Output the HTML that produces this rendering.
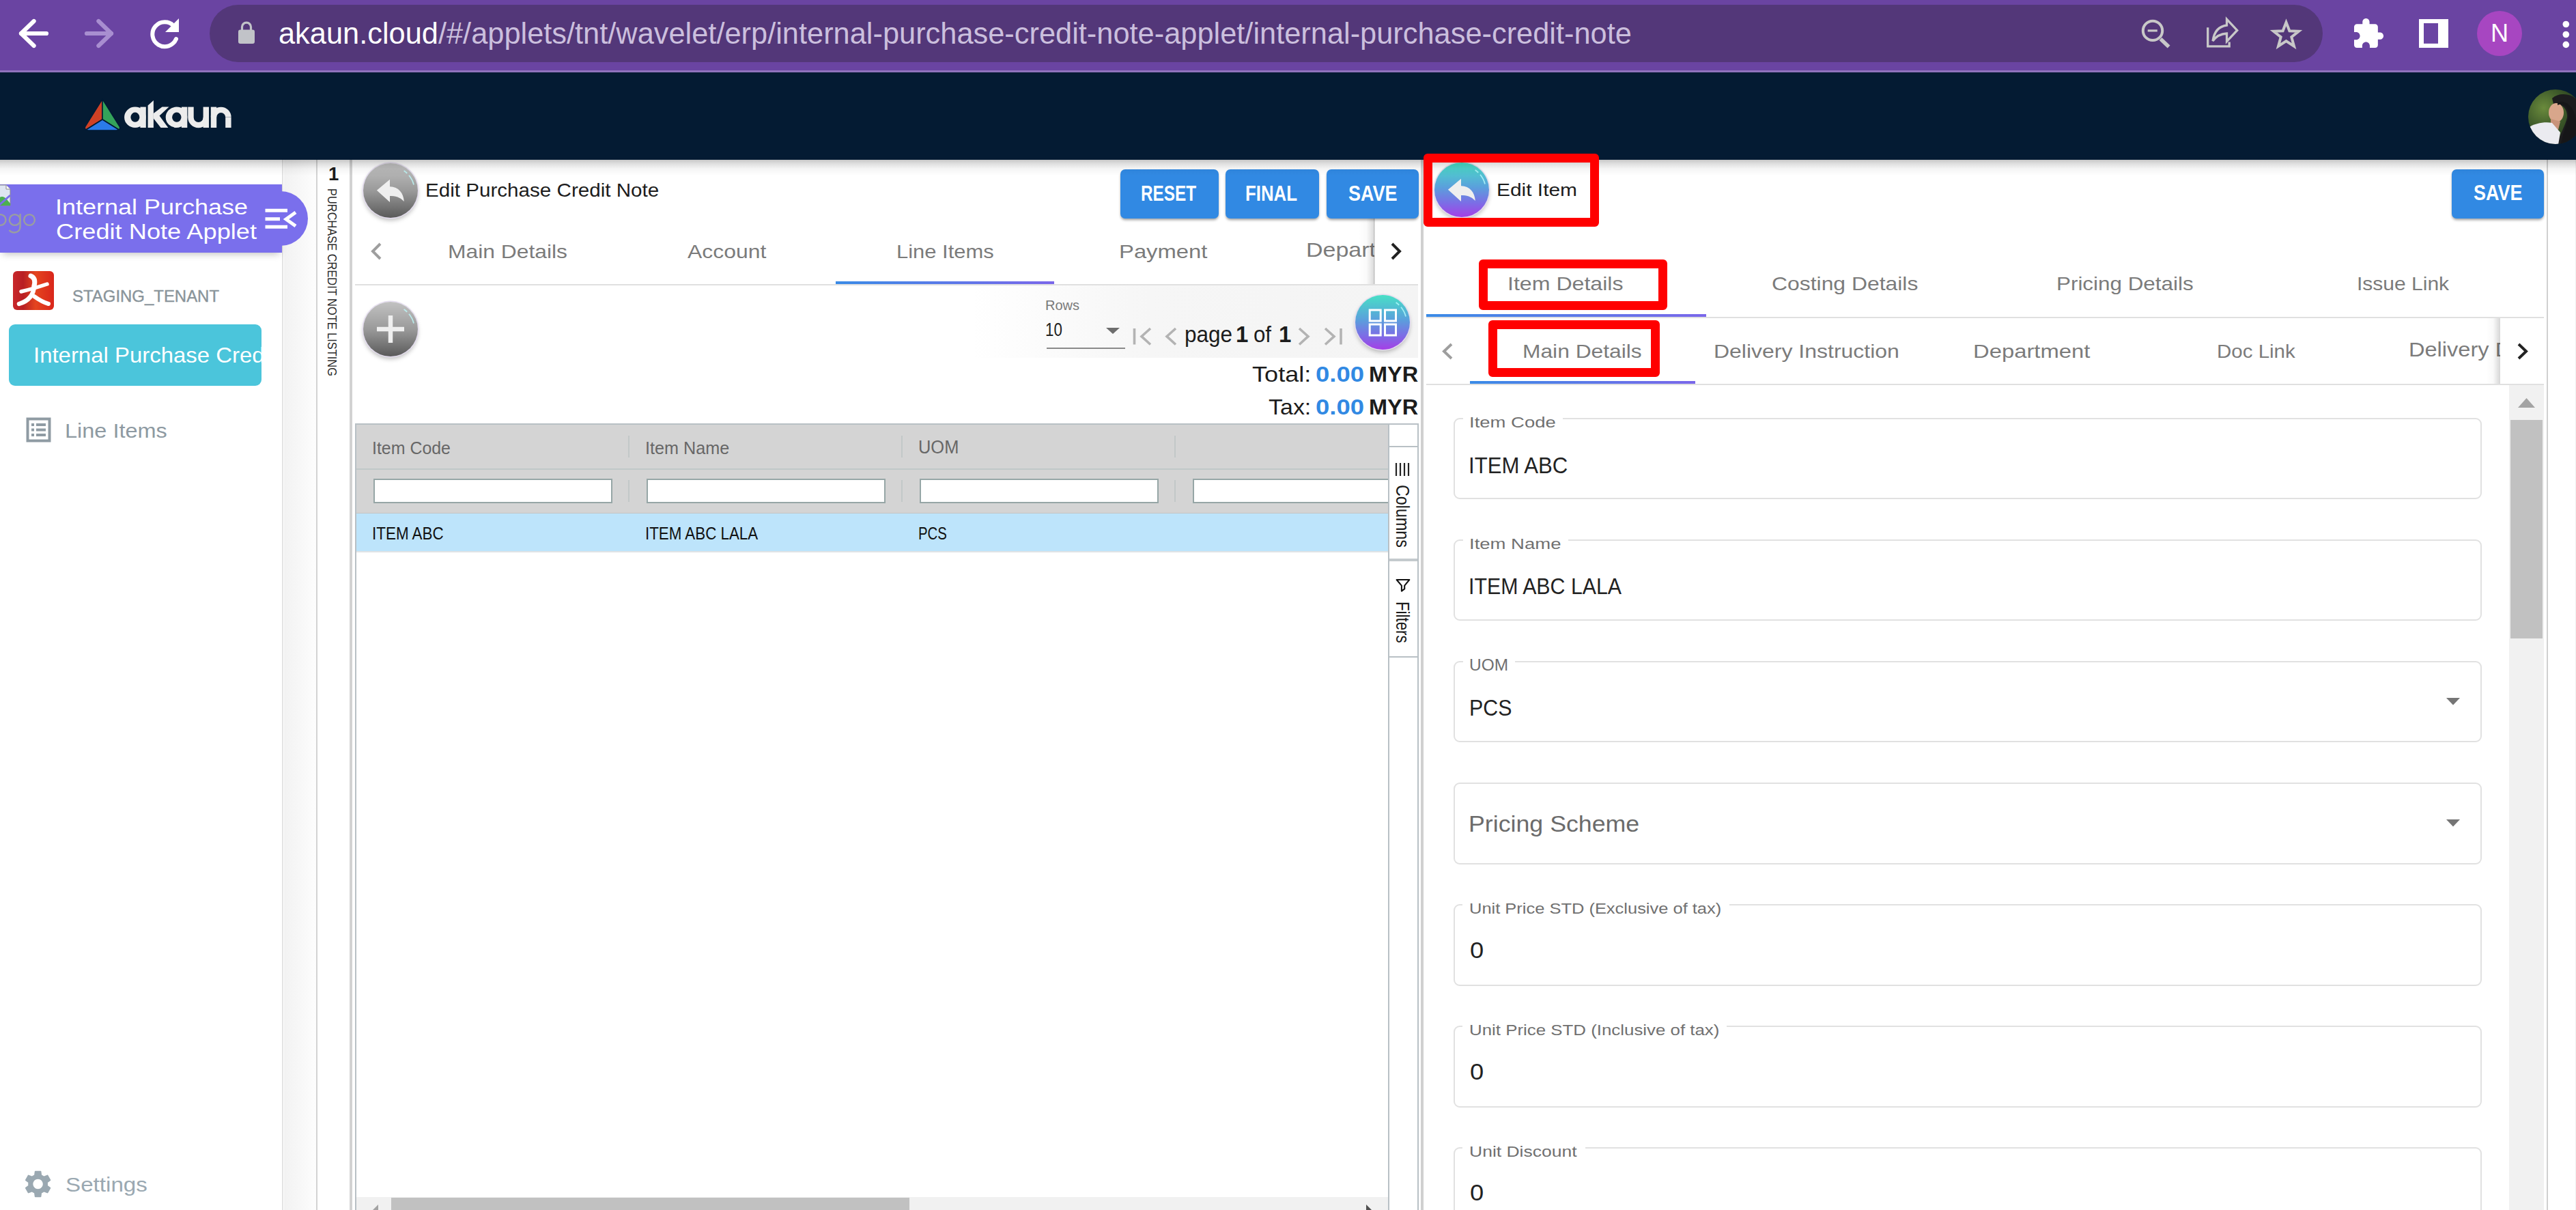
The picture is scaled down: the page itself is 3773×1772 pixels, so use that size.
<!DOCTYPE html>
<html><head><meta charset="utf-8"><title>akaun</title>
<style>
html,body{margin:0;padding:0;width:3773px;height:1772px;overflow:hidden;background:#fff;}
body{position:relative;font-family:"Liberation Sans",sans-serif;}
.t{position:absolute;white-space:nowrap;line-height:1;transform-origin:0 0;}
svg{overflow:visible}
</style></head><body>
<div style="position:absolute;left:0px;top:0px;width:3773px;height:103px;background:#6a44a2"></div>
<div style="position:absolute;left:0px;top:103px;width:3773px;height:3px;background:#9073bd"></div>
<div style="position:absolute;left:307px;top:7px;width:3095px;height:84px;background:#533779;border-radius:42px"></div>
<svg style="position:absolute;left:20px;top:20px;" width="60" height="60" viewBox="0 0 60 60"><g fill="none" stroke="#fff" stroke-width="6.2" stroke-linecap="round" stroke-linejoin="round"><path d="M11 29 H48"/><path d="M29.6 11 L11 29 L29.6 47"/></g></svg>
<svg style="position:absolute;left:116px;top:20px;" width="60" height="60" viewBox="0 0 60 60"><g fill="none" stroke="#a88ed0" stroke-width="6.2" stroke-linecap="round" stroke-linejoin="round"><path d="M11 29 H47"/><path d="M28.4 11 L47 29 L28.4 47"/></g></svg>
<svg style="position:absolute;left:212px;top:20px;" width="60" height="60" viewBox="0 0 60 60"><g fill="none" stroke="#fff" stroke-width="6" stroke-linecap="round"><path d="M43 18.5 A18 18 0 1 0 46 37"/></g><path d="M50 7 L50 27 L30 27 Z" fill="#fff"/></svg>
<svg style="position:absolute;left:345px;top:27px;" width="32" height="40" viewBox="0 0 32 40"><rect x="4" y="16.5" width="24" height="20.5" rx="3" fill="#c1c3c8"/><path d="M9.5 17 V12.6 A6.5 6.5 0 0 1 22.5 12.6 V17" fill="none" stroke="#c1c3c8" stroke-width="3.2"/></svg>
<div id="url" class="t" style="left:408.0px;top:26.6px;font-size:44.00px;color:#fff;font-weight:normal;transform:scaleX(0.9858);">akaun.cloud<span style="color:#cbbfdd">/#/applets/tnt/wavelet/erp/internal-purchase-credit-note-applet/internal-purchase-credit-note</span></div>
<svg style="position:absolute;left:3130px;top:22px;" width="56" height="56" viewBox="0 0 56 56"><g fill="none" stroke="#c8c8c8"><circle cx="23" cy="22.9" r="14.2" stroke-width="4"/><path d="M34.5 35 L46.6 46.5" stroke-width="5.5"/><path d="M15.7 22.9 H29.8" stroke-width="3.2"/></g></svg>
<svg style="position:absolute;left:3226px;top:22px;" width="56" height="56" viewBox="0 0 56 56"><g fill="none" stroke="#c8c8c8" stroke-width="3.3" stroke-linejoin="miter"><path d="M7.7 18.2 V45.9 H39.2 V39.6"/><path d="M15 38 C17 24 24 16.5 35.5 15 V6.1 L50.7 22.4 L35.5 38.6 V27 C26 27.5 20 31 15 38 Z"/></g></svg>
<svg style="position:absolute;left:3320px;top:22px;" width="56" height="56" viewBox="0 0 56 56"><path d="M28.50 10.68 L33.38 23.28 L46.90 23.84 L36.32 32.30 L40.00 45.64 L28.50 38.10 L17.00 45.64 L20.68 32.30 L10.10 23.84 L23.62 23.28 Z" fill="none" stroke="#c8c8c8" stroke-width="4" stroke-linejoin="miter"/></svg>
<svg style="position:absolute;left:3430px;top:10px;" width="80" height="80" viewBox="0 0 80 80"><path fill="#fff" transform="translate(13.9,14.95) scale(2.05)" d="M20.5 11H19V7c0-1.1-.9-2-2-2h-4V3.5C13 2.12 11.88 1 10.5 1S8 2.12 8 3.5V5H4c-1.1 0-1.99.9-1.99 2v3.8H3.5c1.49 0 2.7 1.21 2.7 2.7s-1.21 2.7-2.7 2.7H2V20c0 1.1.9 2 2 2h3.8v-1.5c0-1.490 1.21-2.7 2.7-2.7 1.49 0 2.7 1.21 2.7 2.7V22H17c1.1 0 2-.9 2-2v-4h1.5c1.38 0 2.5-1.12 2.5-2.5S21.88 11 20.5 11z"/></svg>
<svg style="position:absolute;left:3538px;top:22px;" width="56" height="56" viewBox="0 0 56 56"><rect x="5" y="6" width="43" height="42" fill="#fff"/><rect x="12" y="12" width="21" height="29.8" fill="#6a44a2"/></svg>
<div style="position:absolute;left:3628px;top:16px;width:66px;height:66px;border-radius:50%;background:#a746c1"></div>
<div id="avN" class="t" style="left:3648.2px;top:31.4px;font-size:36.00px;color:#fff;font-weight:normal;transform:scaleX(1.0024);">N</div>
<svg style="position:absolute;left:3745px;top:25px;" width="30" height="50" viewBox="0 0 30 50"><circle cx="13.3" cy="10.5" r="4.8" fill="#fff"/><circle cx="13.3" cy="25.5" r="4.8" fill="#fff"/><circle cx="13.3" cy="40.4" r="4.8" fill="#fff"/></svg>
<div style="position:absolute;left:0px;top:106px;width:3773px;height:128px;background:#041b33"></div>
<svg style="position:absolute;left:120px;top:140px;" width="62" height="56" viewBox="0 0 62 56"><g stroke="#021a33" stroke-width="1.5" stroke-linejoin="round"><path d="M30 5 L30 35 L6 50 C4 49 4 47 5 45 Z" fill="#d04125"/><path d="M30 5 L55 45 C56 47 56 49 54 50 L30 35 Z" fill="#34a35a"/><path d="M6 50 L30 35 L54 50 C53 51 52 51 50 51 L10 51 C8 51 7 51 6 50 Z" fill="#2b7be9"/></g></svg>
<svg style="position:absolute;left:0px;top:0px;" width="400" height="240" viewBox="0 0 400 240"><g fill="#ececec"><ellipse cx="197.9" cy="171.8" rx="15.8" ry="15.2"/><rect x="205.4" y="156.6" width="8.4" height="30.4"/><polygon points="216.6,154.5 224.9,147.1 224.9,187 216.6,187"/><polygon points="224.9,166 237.5,156.6 247.5,156.6 233.5,169.5 246.3,187 235.5,187 224.9,173.5"/><ellipse cx="258.5" cy="171.8" rx="15.8" ry="15.2"/><rect x="265.9" y="156.6" width="8.4" height="30.4"/><rect x="275.3" y="156.6" width="8.4" height="15.4"/><rect x="297.6" y="156.6" width="8.4" height="30.4"/><path d="M275.3 172 A15.35 15.35 0 0 0 306 172 H297.6 A6.95 6.95 0 0 1 283.7 172 Z"/><rect x="308.8" y="156.6" width="8.4" height="30.4"/><rect x="330.2" y="171.6" width="8.4" height="15.4"/><path d="M308.8 171.6 A14.9 14.9 0 0 1 338.6 171.6 H330.2 A6.5 6.5 0 0 0 317.2 171.6 Z"/></g><g fill="#041b33"><ellipse cx="197.9" cy="171.7" rx="6.5" ry="7.1"/><ellipse cx="258.8" cy="171.7" rx="6.7" ry="7.1"/></g></svg>
<svg style="position:absolute;left:3700px;top:128px;" width="86" height="86" viewBox="0 0 86 86"><defs><clipPath id="pc"><circle cx="43" cy="43" r="40"/></clipPath><radialGradient id="pg" cx="0.3" cy="0.35" r="0.7"><stop offset="0" stop-color="#6a8a3c"/><stop offset="0.5" stop-color="#3e5a2a"/><stop offset="1" stop-color="#22361c"/></radialGradient></defs><g clip-path="url(#pc)"><rect x="0" y="0" width="86" height="86" fill="url(#pg)"/><path d="M38 16 C52 4 78 10 86 36 L86 90 L44 90 C47 72 57 58 60 44 C61 32 54 24 40 24 Z" fill="#1c1c1e"/><ellipse cx="44" cy="37" rx="11" ry="14" fill="#d8a68b"/><path d="M36 46 L50 50 L47 62 L36 60 Z" fill="#c8937a"/><path d="M2 60 C12 52 28 50 38 52 L50 66 L46 90 L0 90 Z" fill="#ebebf0"/><path d="M46 26 C58 20 66 36 60 50 C58 60 52 70 50 90 L70 90 C72 70 76 50 70 36 C66 26 56 18 46 22 Z" fill="#161618"/></g></svg>
<div style="position:absolute;left:416px;top:234px;width:47px;height:1538px;background:linear-gradient(90deg,#f2f2f2,#fdfdfd)"></div>
<div style="position:absolute;left:463px;top:234px;width:2px;height:1538px;background:#d3d3d3"></div>
<div id="one" class="t" style="left:481.0px;top:240.6px;font-size:27.50px;color:#1b1b1b;font-weight:bold;">1</div>
<div id="pcnl" class="t" style="left:495.8px;top:275.6px;font-size:19px;color:#2a2a2a;transform-origin:0 0;transform:rotate(90deg) scaleX(0.8634)">PURCHASE CREDIT NOTE LISTING</div>
<div id="pcnl_ref" class="t" style="left:0.0px;top:-316.1px;font-size:19.00px;color:#000;font-weight:normal;transform:scaleX(0.8634);">PURCHASE CREDIT NOTE LISTING</div>
<div style="position:absolute;left:512px;top:234px;width:4px;height:1538px;background:#d2d2d2"></div>
<div style="position:absolute;left:413px;top:234px;width:2px;height:1538px;background:#e3e3e3"></div>
<div style="position:absolute;left:0px;top:270px;width:413px;height:100px;background:#7a6fec;box-shadow:0 6px 10px -4px rgba(0,0,0,0.25)"></div>
<div style="position:absolute;left:371px;top:280px;width:80px;height:80px;border-radius:50%;background:#7a6fec"></div>
<div style="position:absolute;left:0px;top:270px;width:413px;height:100px;background:#7a6fec"></div>
<svg style="position:absolute;left:0px;top:270px;" width="18" height="34" viewBox="0 0 18 34"><path d="M-4 1 H9 L15 7 V31 H-4 Z" fill="#dfe6f2" stroke="#8a8a8a" stroke-width="1"/><path d="M9 1 V7 H15" fill="#fff" stroke="#8a8a8a" stroke-width="1"/><path d="M-4 22 Q3 14 10 22 L15 28 V31 H-4 Z" fill="#4caf50"/><path d="M15 16 L-2 31" stroke="#7a6fec" stroke-width="3"/></svg>
<svg style="position:absolute;left:0px;top:300px;" width="60" height="45" viewBox="0 0 60 45"><g fill="none" stroke="#9a9ea0" stroke-width="2.4"><circle cx="0.6" cy="22" r="7.9"/><circle cx="21.7" cy="22" r="7.9"/><path d="M29.6 13 V31 C29.6 38 25 40.5 21 40.5 C17.5 40.5 15 39 13.6 37"/><circle cx="43" cy="22" r="7.9"/></g></svg>
<div id="iph1" class="t" style="left:80.7px;top:287.8px;font-size:30.64px;color:#fff;font-weight:normal;transform:scaleX(1.1745);">Internal Purchase</div>
<div id="iph2" class="t" style="left:81.8px;top:323.8px;font-size:30.64px;color:#fff;font-weight:normal;transform:scaleX(1.1831);">Credit Note Applet</div>
<svg style="position:absolute;left:380px;top:300px;" width="60" height="42" viewBox="0 0 60 42"><g stroke="#fff" stroke-width="5" fill="none"><path d="M8.5 8.3 H41"/><path d="M8.5 20.7 H30"/><path d="M8.5 32.3 H41"/><path d="M53 11 L39 21 L53 31" stroke-linejoin="miter"/></g></svg>
<div style="position:absolute;left:19px;top:397px;width:60px;height:57px;border-radius:6px;background:linear-gradient(90deg,#c9272b 0%,#b81f23 25%,#e4451f 55%,#d9261b 100%)"></div>
<svg style="position:absolute;left:19px;top:397px;" width="60" height="57" viewBox="0 0 60 57"><g fill="none" stroke="#fff" stroke-linecap="round"><path d="M26 7 C31 9 33 14 31 22" stroke-width="7"/><path d="M12 30 C25 27 38 23 50 19" stroke-width="5.5"/><path d="M31 21 C31 34 23 44 9 48" stroke-width="6.5"/><path d="M31 37 C38 42 45 46 52 48" stroke-width="6"/></g></svg>
<div id="stag" class="t" style="left:106.0px;top:422.8px;font-size:23.20px;color:#89949a;font-weight:normal;transform:scaleX(1.0323);-webkit-text-stroke:0.4px #89949a;">STAGING_TENANT</div>
<div style="position:absolute;left:13px;top:475px;width:370px;height:90px;border-radius:9px;background:#4bc5db;overflow:hidden"><div id="ipc" class="t" style="left:36px;top:28.8px;font-size:32px;color:#fff;transform:scaleX(1.0287)">Internal Purchase Credit Note Applet</div></div>
<div id="ipc_ref" class="t" style="left:49.0px;top:-227.2px;font-size:32.00px;color:#fff;font-weight:normal;transform:scaleX(1.0287);">Internal Purchase</div>
<svg style="position:absolute;left:36px;top:609px;" width="42" height="42" viewBox="0 0 42 42"><g fill="none" stroke="#8f9ba3"><rect x="4.5" y="4.5" width="32" height="32" stroke-width="4"/></g><g fill="#8f9ba3"><rect x="10" y="11" width="4" height="4"/><rect x="17" y="11" width="14" height="4"/><rect x="10" y="18.5" width="4" height="4"/><rect x="17" y="18.5" width="14" height="4"/><rect x="10" y="26" width="4" height="4"/><rect x="17" y="26" width="14" height="4"/></g></svg>
<div id="li" class="t" style="left:94.7px;top:616.5px;font-size:29.14px;color:#8e9aa2;font-weight:normal;transform:scaleX(1.1148);">Line Items</div>
<svg style="position:absolute;left:30px;top:1705px;" width="56" height="56" viewBox="0 0 56 56"><path fill="#9aa8b1" transform="translate(1.6,5) scale(2.0)" d="M19.14 12.94c.04-.3.06-.61.06-.94 0-.32-.02-.64-.07-.94l2.03-1.58c.18-.14.23-.41.12-.61l-1.92-3.32c-.12-.22-.37-.29-.59-.22l-2.39.96c-.5-.38-1.03-.7-1.62-.94l-.36-2.54c-.04-.24-.24-.41-.48-.41h-3.840c-.24 0-.43.17-.47.41l-.36 2.54c-.59.24-1.13.57-1.62.94l-2.39-.96c-.22-.08-.47 0-.59.22L2.74 8.87c-.12.21-.08.47.12.61l2.03 1.58c-.05.3-.09.63-.09.94s.02.64.07.94l-2.03 1.58c-.18.14-.23.41-.12.61l1.92 3.32c.12.22.37.29.59.22l2.39-.96c.5.38 1.03.7 1.62.94l.36 2.54c.05.24.24.41.48.41h3.84c.24 0 .44-.17.47-.41l.36-2.54c.59-.24 1.13-.56 1.62-.94l2.39.96c.22.08.47 0 .59-.22l1.92-3.32c.12-.22.07-.47-.12-.61l-2.010-1.58zM12 15.6c-1.98 0-3.6-1.62-3.6-3.6s1.62-3.6 3.6-3.6 3.6 1.62 3.6 3.6-1.62 3.6-3.6 3.6z"/></svg>
<div id="set" class="t" style="left:95.8px;top:1721.0px;font-size:28.67px;color:#9aa8b1;font-weight:normal;transform:scaleX(1.1582);">Settings</div>
<div style="position:absolute;left:532px;top:238.7px;width:80px;height:80px;border-radius:50%;background:linear-gradient(#c2c2c2,#9a9a9a 50%,#5a5a5a);box-shadow:0 0 0 1.5px #e4dcef,0 4px 6px rgba(0,0,0,0.25)"></div>
<svg style="position:absolute;left:532px;top:238.7px;" width="80" height="80" viewBox="0 0 80 80"><path d="M 59.6 11.0 A 35 35 0 0 1 74.0 31.5" fill="none" stroke="rgba(190,255,255,0.75)" stroke-width="1.8" stroke-dasharray="6 4 40"/><path d="M19.9 39.8 L39 23.7 L39 34.3 C52 34.5 59 44 59.8 56 C54 49.5 47 47.9 39 47.9 L39 57 Z" fill="#efefef"/><!--12.85000000000002311.350000000000023--></svg>
<div style="position:absolute;left:532px;top:442px;width:80px;height:80px;border-radius:50%;background:linear-gradient(#c2c2c2,#9a9a9a 50%,#5a5a5a);box-shadow:0 0 0 1.5px #e4dcef,0 4px 6px rgba(0,0,0,0.25)"></div>
<svg style="position:absolute;left:532px;top:442px;" width="80" height="80" viewBox="0 0 80 80"><path d="M 59.6 11.0 A 35 35 0 0 1 74.0 31.5" fill="none" stroke="rgba(190,255,255,0.75)" stroke-width="1.8" stroke-dasharray="6 4 40"/><g stroke="#efefef" stroke-width="6.5"><path d="M40 20 V60"/><path d="M20 40 H60"/></g></svg>
<div id="epcn" class="t" style="left:622.8px;top:264.6px;font-size:27.26px;color:#1c1c1c;font-weight:normal;transform:scaleX(1.0863);">Edit Purchase Credit Note</div>
<div style="position:absolute;left:1641px;top:248px;width:144px;height:72px;border-radius:7px;background:#3189e3;box-shadow:0 3px 4px -1px rgba(0,0,0,0.3),0 2px 3px rgba(0,0,0,0.12)"></div>
<div id="b_reset" class="t" style="left:1670.9px;top:267.7px;font-size:30.50px;color:#fff;font-weight:bold;transform:scaleX(0.7970);">RESET</div>
<div style="position:absolute;left:1795px;top:248px;width:137px;height:72px;border-radius:7px;background:#3189e3;box-shadow:0 3px 4px -1px rgba(0,0,0,0.3),0 2px 3px rgba(0,0,0,0.12)"></div>
<div id="b_final" class="t" style="left:1823.9px;top:267.7px;font-size:30.50px;color:#fff;font-weight:bold;transform:scaleX(0.8463);">FINAL</div>
<div style="position:absolute;left:1943px;top:248px;width:135px;height:72px;border-radius:7px;background:#3189e3;box-shadow:0 3px 4px -1px rgba(0,0,0,0.3),0 2px 3px rgba(0,0,0,0.12)"></div>
<div id="b_save" class="t" style="left:1974.9px;top:267.7px;font-size:30.50px;color:#fff;font-weight:bold;transform:scaleX(0.8846);">SAVE</div>
<svg style="position:absolute;left:540px;top:352px;" width="24" height="32" viewBox="0 0 24 32"><path d="M17 5 L6 16 L17 27" fill="none" stroke="#9e9e9e" stroke-width="4"/></svg>
<div id="tab_md" class="t" style="left:655.8px;top:354.6px;font-size:27.26px;color:#7b7b7b;font-weight:normal;transform:scaleX(1.1672);">Main Details</div>
<div id="tab_ac" class="t" style="left:1007.0px;top:354.6px;font-size:27.26px;color:#7b7b7b;font-weight:normal;transform:scaleX(1.1706);">Account</div>
<div id="tab_li" class="t" style="left:1312.8px;top:354.6px;font-size:27.26px;color:#7b7b7b;font-weight:normal;transform:scaleX(1.1347);">Line Items</div>
<div id="tab_pa" class="t" style="left:1638.7px;top:354.6px;font-size:27.26px;color:#7b7b7b;font-weight:normal;transform:scaleX(1.2037);">Payment</div>
<div style="position:absolute;left:1900px;top:330px;width:113px;height:80px;overflow:hidden"><div class="t" style="left:12.6px;top:22.4px;font-size:29px;color:#7b7b7b;transform:scaleX(1.1724)">Department</div></div>
<div style="position:absolute;left:1990px;top:320px;width:23px;height:96px;background:linear-gradient(90deg,rgba(0,0,0,0),rgba(0,0,0,0.02) 50%,rgba(0,0,0,0.15))"></div>
<div style="position:absolute;left:2012px;top:320px;width:1.5px;height:96px;background:rgba(0,0,0,0.12)"></div>
<svg style="position:absolute;left:2030px;top:352px;" width="28" height="32" viewBox="0 0 28 32"><path d="M9 5 L20 16 L9 27" fill="none" stroke="#222" stroke-width="4"/></svg>
<div style="position:absolute;left:520px;top:416px;width:1557px;height:2px;background:#e0e0e0"></div>
<div style="position:absolute;left:1224px;top:412px;width:320px;height:4px;background:linear-gradient(90deg,#3a8be6,#7a67ea)"></div>
<div style="position:absolute;left:1423px;top:418px;width:654px;height:106px;background:linear-gradient(90deg,#ffffff,#f6f6f6 40%,#f4f4f4)"></div>
<div id="rows" class="t" style="left:1530.8px;top:436.7px;font-size:20.30px;color:#7a7a7a;font-weight:normal;transform:scaleX(0.9879);">Rows</div>
<div id="ten" class="t" style="left:1530.6px;top:469.8px;font-size:27.00px;color:#222;font-weight:normal;transform:scaleX(0.8260);">10</div>
<svg style="position:absolute;left:1615px;top:475px;" width="30" height="20" viewBox="0 0 30 20"><path d="M5 5 H25 L15 14 Z" fill="#6d6d6d"/></svg>
<div style="position:absolute;left:1533px;top:508.5px;width:115px;height:2px;background:#8a8a8a"></div>
<svg style="position:absolute;left:1650px;top:475px;" width="320" height="36" viewBox="0 0 320 36"><g fill="none" stroke="#b3b3b3" stroke-width="3.6"><path d="M11.5 6 V29.5"/><path d="M35 6 L22 17.7 L35 29.5"/><path d="M72 6 L59 17.7 L72 29.5"/><path d="M253 6 L266 17.7 L253 29.5"/><path d="M291 6 L304 17.7 L291 29.5"/><path d="M314 6 V29.5"/></g></svg>
<div id="pg_page" class="t" style="left:1734.8px;top:472.9px;font-size:33.00px;color:#1c1c1c;font-weight:normal;transform:scaleX(0.9554);">page</div>
<div id="pg_1a" class="t" style="left:1810.0px;top:472.9px;font-size:33.00px;color:#1c1c1c;font-weight:bold;">1</div>
<div id="pg_of" class="t" style="left:1835.9px;top:472.9px;font-size:33.00px;color:#1c1c1c;font-weight:normal;transform:scaleX(0.9459);">of</div>
<div id="pg_1b" class="t" style="left:1873.0px;top:472.9px;font-size:33.00px;color:#1c1c1c;font-weight:bold;">1</div>
<div style="position:absolute;left:1985px;top:432px;width:80px;height:80px;border-radius:50%;background:linear-gradient(#48e0c6,#5aa0dc 45%,#7d6ce6 75%,#a53fe6);box-shadow:0 0 0 1.5px #e4dcef,0 4px 6px rgba(0,0,0,0.25)"></div>
<svg style="position:absolute;left:1985px;top:432px;" width="80" height="80" viewBox="0 0 80 80"><path d="M 59.6 11.0 A 35 35 0 0 1 74.0 31.5" fill="none" stroke="rgba(190,255,255,0.75)" stroke-width="1.8" stroke-dasharray="6 4 40"/><g fill="none" stroke="#fff" stroke-width="3"><rect x="21.200000000000045" y="22" width="16" height="16"/><rect x="43.5" y="22" width="16" height="16"/><rect x="21.200000000000045" y="43" width="16" height="16"/><rect x="43.5" y="43" width="16" height="16"/></g></svg>
<div id="tot" class="t" style="left:1833.9px;top:531.5px;font-size:32.00px;color:#1c1c1c;font-weight:normal;transform:scaleX(1.1286);">Total:</div>
<div id="tot_v" class="t" style="left:1926.9px;top:531.5px;font-size:32.00px;color:#3189e3;font-weight:bold;transform:scaleX(1.1410);">0.00</div>
<div id="tot_m" class="t" style="left:2004.8px;top:531.5px;font-size:32.00px;color:#1c1c1c;font-weight:bold;transform:scaleX(1.0144);">MYR</div>
<div id="tax" class="t" style="left:1857.8px;top:579.5px;font-size:32.00px;color:#1c1c1c;font-weight:normal;transform:scaleX(1.0615);">Tax:</div>
<div id="tax_v" class="t" style="left:1926.9px;top:579.5px;font-size:32.00px;color:#3189e3;font-weight:bold;transform:scaleX(1.1410);">0.00</div>
<div id="tax_m" class="t" style="left:2004.8px;top:579.5px;font-size:32.00px;color:#1c1c1c;font-weight:bold;transform:scaleX(1.0144);">MYR</div>
<div style="position:absolute;left:520px;top:620px;width:1558px;height:2px;background:#b8c0c5"></div>
<div style="position:absolute;left:520px;top:620px;width:2px;height:1152px;background:#b8c0c5"></div>
<div style="position:absolute;left:2076px;top:620px;width:2px;height:1152px;background:#b8c0c5"></div>
<div style="position:absolute;left:522px;top:622px;width:1511px;height:64px;background:#d4d4d4"></div>
<div style="position:absolute;left:522px;top:686px;width:1511px;height:2px;background:#c0c8c8"></div>
<div style="position:absolute;left:522px;top:688px;width:1511px;height:63px;background:#d4d4d4"></div>
<div style="position:absolute;left:522px;top:751px;width:1511px;height:1px;background:#c4c4c4"></div>
<div style="position:absolute;left:522px;top:752px;width:1511px;height:55px;background:#bde4fb"></div>
<div style="position:absolute;left:522px;top:807px;width:1511px;height:1.5px;background:#dfe3e6"></div>
<div style="position:absolute;left:920px;top:638px;width:2px;height:32px;background:#c2c8c8"></div>
<div style="position:absolute;left:920px;top:703px;width:2px;height:32px;background:#c2c8c8"></div>
<div style="position:absolute;left:1320px;top:638px;width:2px;height:32px;background:#c2c8c8"></div>
<div style="position:absolute;left:1320px;top:703px;width:2px;height:32px;background:#c2c8c8"></div>
<div style="position:absolute;left:1720px;top:638px;width:2px;height:32px;background:#c2c8c8"></div>
<div style="position:absolute;left:1720px;top:703px;width:2px;height:32px;background:#c2c8c8"></div>
<div id="g_ic" class="t" style="left:544.8px;top:643.8px;font-size:25.38px;color:#676767;font-weight:normal;transform:scaleX(0.9820);">Item Code</div>
<div id="g_in" class="t" style="left:944.8px;top:643.8px;font-size:25.38px;color:#676767;font-weight:normal;transform:scaleX(0.9932);">Item Name</div>
<div id="g_uom" class="t" style="left:1344.7px;top:642.4px;font-size:27.00px;color:#676767;font-weight:normal;transform:scaleX(0.9421);">UOM</div>
<div style="position:absolute;left:546.6px;top:701px;width:350.9px;height:35.6px;background:#fff;border:2px solid #96a6a6;box-sizing:border-box;"></div>
<div style="position:absolute;left:946.6px;top:701px;width:350.9px;height:35.6px;background:#fff;border:2px solid #96a6a6;box-sizing:border-box;"></div>
<div style="position:absolute;left:1346.6px;top:701px;width:350.9000000000001px;height:35.6px;background:#fff;border:2px solid #96a6a6;box-sizing:border-box;"></div>
<div style="position:absolute;left:1746.6px;top:701px;width:286.4000000000001px;height:35.6px;background:#fff;border:2px solid #96a6a6;box-sizing:border-box;border-right:none;"></div>
<div id="r_ic" class="t" style="left:544.9px;top:769.0px;font-size:25.60px;color:#111;font-weight:normal;transform:scaleX(0.8762);">ITEM ABC</div>
<div id="r_in" class="t" style="left:945.0px;top:769.0px;font-size:25.60px;color:#111;font-weight:normal;transform:scaleX(0.8733);">ITEM ABC LALA</div>
<div id="r_uom" class="t" style="left:1344.8px;top:769.0px;font-size:25.60px;color:#111;font-weight:normal;transform:scaleX(0.7970);">PCS</div>
<div style="position:absolute;left:2033px;top:621px;width:2px;height:1151px;background:#b8c0c5"></div>
<div style="position:absolute;left:2035px;top:653px;width:41px;height:2px;background:#b8c0c5"></div>
<div style="position:absolute;left:2035px;top:818px;width:41px;height:4px;background:#c4cacd"></div>
<div style="position:absolute;left:2035px;top:961px;width:41px;height:2px;background:#b8c0c5"></div>
<svg style="position:absolute;left:2040px;top:675px;" width="30" height="26" viewBox="0 0 30 26"><g stroke="#222" stroke-width="2.2"><path d="M5 3 V22"/><path d="M11 3 V22"/><path d="M17 3 V22"/><path d="M23 3 V22"/></g></svg>
<div id="cols" class="t" style="left:2066.9px;top:710px;font-size:27px;color:#1b1b1b;transform:rotate(90deg) scaleX(0.8635)">Columns</div>
<div id="cols_ref" class="t" style="left:0.0px;top:-422.9px;font-size:27.00px;color:#000;font-weight:normal;transform:scaleX(0.8635);">Columns</div>
<svg style="position:absolute;left:2040px;top:843px;" width="30" height="28" viewBox="0 0 30 28"><path d="M5.6 6 H24.3 L17.2 14.6 V19.4 L12.9 22.6 V14.6 Z" fill="none" stroke="#111" stroke-width="2.1" stroke-linejoin="round"/></svg>
<div id="filt" class="t" style="left:2066.9px;top:881px;font-size:27px;color:#1b1b1b;transform:rotate(90deg) scaleX(0.8245)">Filters</div>
<div id="filt_ref" class="t" style="left:0.0px;top:-523.0px;font-size:27.00px;color:#000;font-weight:normal;transform:scaleX(0.8245);">Filters</div>
<div style="position:absolute;left:522px;top:1753px;width:1511px;height:19px;background:#f1f1f1"></div>
<div style="position:absolute;left:573px;top:1754px;width:759px;height:18px;background:#c1c1c1"></div>
<svg style="position:absolute;left:540px;top:1755px;" width="20" height="30" viewBox="0 0 20 30"><path d="M14 9 L6 17 L14 25 Z" fill="#a3a3a3"/></svg>
<svg style="position:absolute;left:1995px;top:1755px;" width="20" height="30" viewBox="0 0 20 30"><path d="M6 9 L14 17 L6 25 Z" fill="#505050"/></svg>
<div style="position:absolute;left:2081px;top:234px;width:4px;height:1538px;background:#d0d0d0"></div>
<div style="position:absolute;left:2101px;top:237.7px;width:80px;height:80px;border-radius:50%;background:linear-gradient(#48e0c6,#5aa0dc 45%,#7d6ce6 75%,#a53fe6);box-shadow:0 0 0 1.5px #e4dcef,0 4px 6px rgba(0,0,0,0.25)"></div>
<svg style="position:absolute;left:2101px;top:237.7px;" width="80" height="80" viewBox="0 0 80 80"><path d="M 59.6 11.0 A 35 35 0 0 1 74.0 31.5" fill="none" stroke="rgba(190,255,255,0.75)" stroke-width="1.8" stroke-dasharray="6 4 40"/><path d="M19.9 39.8 L39 23.7 L39 34.3 C52 34.5 59 44 59.8 56 C54 49.5 47 47.9 39 47.9 L39 57 Z" fill="#efefef"/><!--12.84999999999990912.050000000000011--></svg>
<div id="ei" class="t" style="left:2191.7px;top:265.1px;font-size:26.32px;color:#1c1c1c;font-weight:normal;transform:scaleX(1.1364);">Edit Item</div>
<div style="position:absolute;left:3591px;top:248px;width:135px;height:72px;border-radius:7px;background:#3189e3;box-shadow:0 3px 4px -1px rgba(0,0,0,0.3),0 2px 3px rgba(0,0,0,0.12)"></div>
<div id="b_save2" class="t" style="left:3622.9px;top:267.0px;font-size:30.50px;color:#fff;font-weight:bold;transform:scaleX(0.8856);">SAVE</div>
<div id="t1_id" class="t" style="left:2207.6px;top:402.2px;font-size:27.26px;color:#7b7b7b;font-weight:normal;transform:scaleX(1.1785);">Item Details</div>
<div id="t1_cd" class="t" style="left:2594.9px;top:402.2px;font-size:27.26px;color:#7b7b7b;font-weight:normal;transform:scaleX(1.1698);">Costing Details</div>
<div id="t1_pd" class="t" style="left:3011.8px;top:402.2px;font-size:27.26px;color:#7b7b7b;font-weight:normal;transform:scaleX(1.1522);">Pricing Details</div>
<div id="t1_il" class="t" style="left:3451.7px;top:402.2px;font-size:27.26px;color:#7b7b7b;font-weight:normal;transform:scaleX(1.1011);">Issue Link</div>
<div style="position:absolute;left:2089px;top:464px;width:1637px;height:2px;background:#e0e0e0"></div>
<div style="position:absolute;left:2089px;top:460px;width:409.5px;height:4px;background:linear-gradient(90deg,#3a8be6,#7a67ea)"></div>
<svg style="position:absolute;left:2106px;top:498px;" width="30" height="32" viewBox="0 0 30 32"><path d="M20 6 L9 16.5 L20 27" fill="none" stroke="#9e9e9e" stroke-width="4"/></svg>
<div id="t2_md" class="t" style="left:2229.8px;top:500.6px;font-size:27.26px;color:#7b7b7b;font-weight:normal;transform:scaleX(1.1651);">Main Details</div>
<div id="t2_di" class="t" style="left:2509.8px;top:500.6px;font-size:27.26px;color:#7b7b7b;font-weight:normal;transform:scaleX(1.1734);">Delivery Instruction</div>
<div id="t2_de" class="t" style="left:2889.8px;top:500.6px;font-size:27.26px;color:#7b7b7b;font-weight:normal;transform:scaleX(1.2036);">Department</div>
<div id="t2_dl" class="t" style="left:3246.8px;top:500.6px;font-size:27.26px;color:#7b7b7b;font-weight:normal;transform:scaleX(1.0823);">Doc Link</div>
<div style="position:absolute;left:3510px;top:470px;width:152px;height:90px;overflow:hidden"><div class="t" style="left:17.6px;top:28.4px;font-size:29px;color:#7b7b7b;transform:scaleX(1.1226)">Delivery Date</div></div>
<div style="position:absolute;left:3641px;top:466px;width:21px;height:96px;background:linear-gradient(90deg,rgba(0,0,0,0),rgba(0,0,0,0.02) 50%,rgba(0,0,0,0.16))"></div>
<svg style="position:absolute;left:3680px;top:498px;" width="30" height="32" viewBox="0 0 30 32"><path d="M9 6 L20 16.5 L9 27" fill="none" stroke="#222" stroke-width="4"/></svg>
<div style="position:absolute;left:2089px;top:562px;width:1637px;height:2px;background:#e0e0e0"></div>
<div style="position:absolute;left:2153px;top:557.6px;width:330px;height:4px;background:linear-gradient(90deg,#3a8be6,#7a67ea)"></div>
<div style="position:absolute;left:3675px;top:564px;width:51px;height:1208px;background:#f1f1f1"></div>
<div style="position:absolute;left:3677px;top:615px;width:47px;height:320px;background:#c1c1c1"></div>
<svg style="position:absolute;left:3685px;top:580px;" width="32" height="20" viewBox="0 0 32 20"><path d="M3 17 L15.5 3 L28 17 Z" fill="#a3a3a3"/></svg>
<div style="position:absolute;left:3730px;top:234px;width:2px;height:1538px;background:#d0d0d0"></div>
<div style="position:absolute;left:3772px;top:234px;width:1px;height:1538px;background:#f0f0f0"></div>
<div style="position:absolute;left:2129px;top:611.5px;width:1506px;height:119.5px;box-sizing:border-box;border:2px solid #e1e1e1;border-radius:9px;"></div>
<div style="position:absolute;left:2142.5px;top:610.5px;width:146.9000000000001px;height:6px;background:#fff"></div>
<div id="f1_l" class="t" style="left:2151.8px;top:606.6px;font-size:22.94px;color:#707070;font-weight:normal;transform:scaleX(1.1974);">Item Code</div>
<div id="f1_v" class="t" style="left:2150.8px;top:665.8px;font-size:32.70px;color:#222;font-weight:normal;transform:scaleX(0.9519);">ITEM ABC</div>
<div style="position:absolute;left:2129px;top:789.8px;width:1506px;height:119.5px;box-sizing:border-box;border:2px solid #e1e1e1;border-radius:9px;"></div>
<div style="position:absolute;left:2142.5px;top:788.8px;width:154.5px;height:6px;background:#fff"></div>
<div id="f2_l" class="t" style="left:2151.8px;top:784.9px;font-size:22.94px;color:#707070;font-weight:normal;transform:scaleX(1.1988);">Item Name</div>
<div id="f2_v" class="t" style="left:2150.9px;top:843.2px;font-size:32.70px;color:#222;font-weight:normal;transform:scaleX(0.9272);">ITEM ABC LALA</div>
<div style="position:absolute;left:2129px;top:967.7px;width:1506px;height:119.5px;box-sizing:border-box;border:2px solid #e1e1e1;border-radius:9px;"></div>
<div style="position:absolute;left:2143px;top:966.7px;width:76px;height:6px;background:#fff"></div>
<div id="f3_l" class="t" style="left:2151.7px;top:961.6px;font-size:24.40px;color:#707070;font-weight:normal;transform:scaleX(1.0024);">UOM</div>
<div id="f3_v" class="t" style="left:2151.8px;top:1021.0px;font-size:32.70px;color:#222;font-weight:normal;transform:scaleX(0.9281);">PCS</div>
<svg style="position:absolute;left:3578px;top:1016.7px;" width="30" height="20" viewBox="0 0 30 20"><path d="M5 5 H25 L15 15.5 Z" fill="#757575"/></svg>
<div style="position:absolute;left:2129px;top:1146px;width:1506px;height:119.5px;box-sizing:border-box;border:2px solid #e1e1e1;border-radius:9px;"></div>
<div id="f4_v" class="t" style="left:2150.7px;top:1191.4px;font-size:32.62px;color:#6b6b6b;font-weight:normal;transform:scaleX(1.0958);">Pricing Scheme</div>
<svg style="position:absolute;left:3578px;top:1195px;" width="30" height="20" viewBox="0 0 30 20"><path d="M5 5 H25 L15 15.5 Z" fill="#757575"/></svg>
<div style="position:absolute;left:2129px;top:1324px;width:1506px;height:119.5px;box-sizing:border-box;border:2px solid #e1e1e1;border-radius:9px;"></div>
<div style="position:absolute;left:2142px;top:1323px;width:390.8000000000002px;height:6px;background:#fff"></div>
<div id="f5_l" class="t" style="left:2151.8px;top:1319.1px;font-size:22.94px;color:#707070;font-weight:normal;transform:scaleX(1.1099);">Unit Price STD (Exclusive of tax)</div>
<div id="f5_v" class="t" style="left:2152.7px;top:1375.8px;font-size:32.70px;color:#222;font-weight:normal;transform:scaleX(1.1097);">0</div>
<div style="position:absolute;left:2129px;top:1502px;width:1506px;height:119.5px;box-sizing:border-box;border:2px solid #e1e1e1;border-radius:9px;"></div>
<div style="position:absolute;left:2142px;top:1501px;width:387px;height:6px;background:#fff"></div>
<div id="f6_l" class="t" style="left:2151.8px;top:1497.1px;font-size:22.94px;color:#707070;font-weight:normal;transform:scaleX(1.1273);">Unit Price STD (Inclusive of tax)</div>
<div id="f6_v" class="t" style="left:2152.7px;top:1553.5px;font-size:32.70px;color:#222;font-weight:normal;transform:scaleX(1.1097);">0</div>
<div style="position:absolute;left:2129px;top:1680px;width:1506px;height:119.5px;box-sizing:border-box;border:2px solid #e1e1e1;border-radius:9px;"></div>
<div style="position:absolute;left:2142px;top:1679px;width:179.69999999999982px;height:6px;background:#fff"></div>
<div id="f7_l" class="t" style="left:2151.8px;top:1675.1px;font-size:22.94px;color:#707070;font-weight:normal;transform:scaleX(1.1553);">Unit Discount</div>
<div id="f7_v" class="t" style="left:2152.7px;top:1731.0px;font-size:32.70px;color:#222;font-weight:normal;transform:scaleX(1.1097);">0</div>
<div style="position:absolute;left:0px;top:234px;width:3773px;height:24px;background:linear-gradient(rgba(0,0,0,0.22),rgba(0,0,0,0.12) 25%,rgba(0,0,0,0.04) 55%,rgba(0,0,0,0))"></div>
<div style="position:absolute;left:2085px;top:225px;width:257px;height:107px;box-sizing:border-box;border:13px solid #ff0000;border-radius:6px"></div>
<div style="position:absolute;left:2166px;top:379.5px;width:276px;height:74.10000000000002px;box-sizing:border-box;border:13px solid #ff0000;border-radius:6px"></div>
<div style="position:absolute;left:2180px;top:468.7px;width:251px;height:83.80000000000001px;box-sizing:border-box;border:13px solid #ff0000;border-radius:6px"></div>
</body></html>
